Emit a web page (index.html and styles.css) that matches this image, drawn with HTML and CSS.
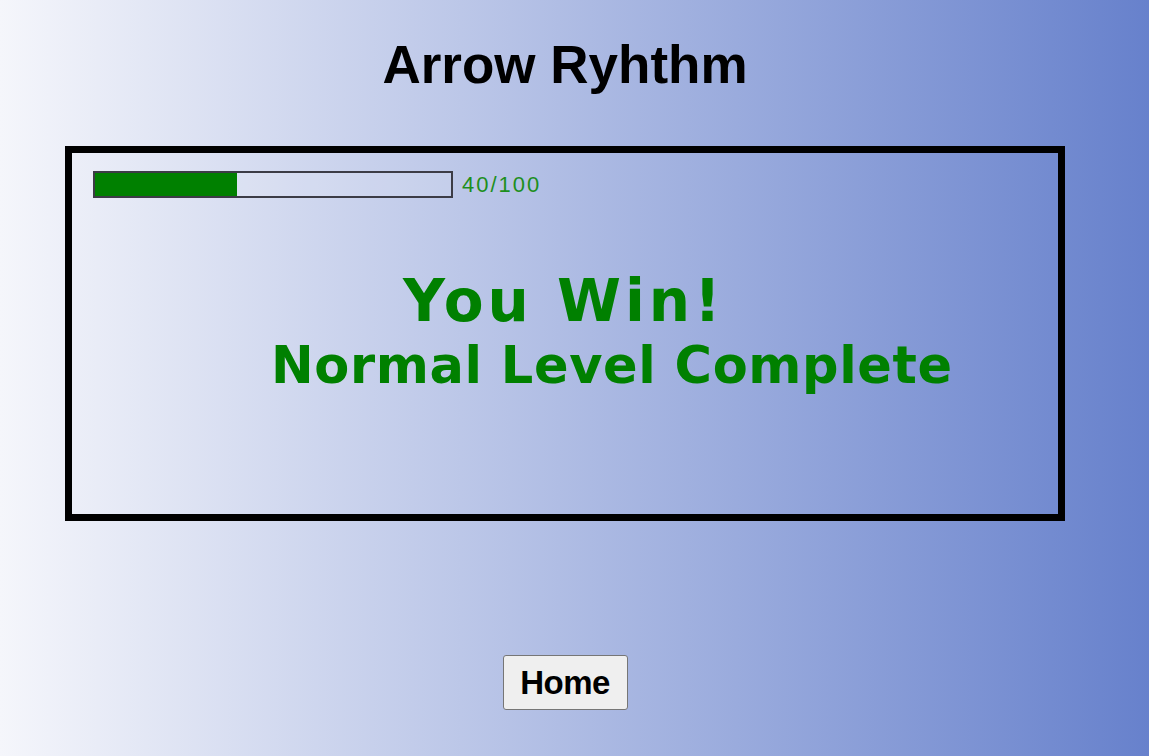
FILE: index.html
```html
<!DOCTYPE html>
<html lang="en">
<head>
<meta charset="utf-8">
<title>Arrow Ryhthm</title>
<link rel="stylesheet" href="styles.css">
</head>
<body>
<main class="page">
  <h1 class="title">Arrow Ryhthm</h1>
  <section class="game">
    <div class="progress-row">
      <div class="bar"><div class="bar-fill" style="width:40%"></div></div>
      <span class="score">40/100</span>
    </div>
    <p class="win">You Win!</p>
    <p class="level">Normal Level Complete</p>
  </section>
  <button class="home" type="button">Home</button>
</main>
</body>
</html>
```
FILE: styles.css
```css
html {
  background: linear-gradient(90deg, #f5f6fb 0%, #6781cc 100%);
  min-height: 100%;
}
body {
  margin: 0;
  min-height: 756px;
  font-family: "Liberation Sans", Arial, sans-serif;
}
.page {
  width: 1130px;
  display: flex;
  flex-direction: column;
  align-items: center;
  padding-top: 33px;
}
.title {
  margin: 0;
  font-family: "Liberation Sans", Arial, sans-serif;
  font-size: 53px;
  line-height: 64px;
  font-weight: 700;
  color: #000;
}
.game {
  box-sizing: border-box;
  width: 1000px;
  height: 375px;
  margin-top: 49px;
  border: 7px solid #000;
  padding: 18px 21px 0;
}
.progress-row {
  display: flex;
  align-items: center;
  gap: 9px;
}
.bar {
  box-sizing: border-box;
  width: 360px;
  height: 27px;
  border: 2px solid #3c3c46;
  background: rgba(255, 255, 255, 0.12);
}
.bar-fill {
  height: 100%;
  background: #008000;
}
.score {
  font-family: "Liberation Sans", Arial, sans-serif;
  font-size: 22px;
  letter-spacing: 2px;
  color: #1d8f1d;
}
.win {
  margin: 73px 0 0;
  padding-left: 310px;
  font-family: "DejaVu Sans", sans-serif;
  font-weight: 700;
  font-size: 58px;
  line-height: 60px;
  letter-spacing: 4px;
  color: #008000;
}
.level {
  margin: 10px 0 0;
  padding-left: 178px;
  font-family: "DejaVu Sans", sans-serif;
  font-weight: 700;
  font-size: 51px;
  line-height: 50px;
  letter-spacing: 0.6px;
  color: #008000;
}
.home {
  margin-top: 134px;
  width: 125px;
  height: 55px;
  padding: 0;
  border: 1px solid #767676;
  border-radius: 3px;
  background: #efefef;
  font-family: "Liberation Sans", Arial, sans-serif;
  font-weight: 700;
  font-size: 33px;
  letter-spacing: -0.5px;
  color: #000;
}
```
